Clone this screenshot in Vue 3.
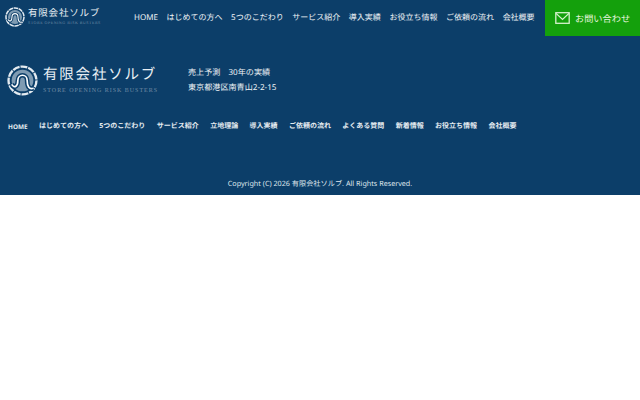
<script setup>
const topNav = ['HOME','はじめての方へ','5つのこだわり','サービス紹介','導入実績','お役立ち情報','ご依頼の流れ','会社概要']
const footNav = ['HOME','はじめての方へ','5つのこだわり','サービス紹介','立地理論','導入実績','ご依頼の流れ','よくある質問','新着情報','お役立ち情報','会社概要']
</script>

<template>
  <div class="page">
    <header class="top">
      <div class="top-logo">
        <svg class="emblem-small" viewBox="0 0 40 40" aria-hidden="true">
          <circle cx="20" cy="20" r="18" fill="none" stroke="#e4ebf1" stroke-width="3" stroke-dasharray="9 1.2"/>
          <circle cx="20" cy="20" r="14" fill="#7f9bb2"/>
          <path d="M6 25c4 6 8 2 8-5 0-9 12-9 12 0 0 8 3 12 8 10" fill="none" stroke="#0c3e69" stroke-width="6"/>
          <path d="M6 25c4 6 8 2 8-5 0-9 12-9 12 0 0 8 3 12 8 10" fill="none" stroke="#fff" stroke-width="2.2"/>
        </svg>
        <div class="logo-text small">
          <div class="logo-jp">有限会社ソルブ</div>
          <div class="logo-en">STORE OPENING RISK BUSTERS</div>
        </div>
      </div>
      <nav class="top-nav">
        <a v-for="n in topNav" :key="n">{{ n }}</a>
      </nav>
      <a class="contact">
        <svg class="mail" viewBox="0 0 16 13" aria-hidden="true">
          <rect x=".75" y=".75" width="14.5" height="11.5" fill="none" stroke="#d6f2cd" stroke-width="1.4"/>
          <path d="M1 1.5l7 6.5 7-6.5" fill="none" stroke="#d6f2cd" stroke-width="1.4"/>
        </svg>
        <span>お問い合わせ</span>
      </a>
    </header>

    <section class="company">
      <div class="main-logo">
        <svg class="emblem-large" viewBox="0 0 40 40" aria-hidden="true">
          <circle cx="20" cy="20" r="18" fill="none" stroke="#e4ebf1" stroke-width="3" stroke-dasharray="9 1.2"/>
          <circle cx="20" cy="20" r="14" fill="#7f9bb2"/>
          <path d="M6 25c4 6 8 2 8-5 0-9 12-9 12 0 0 8 3 12 8 10" fill="none" stroke="#0c3e69" stroke-width="6"/>
          <path d="M6 25c4 6 8 2 8-5 0-9 12-9 12 0 0 8 3 12 8 10" fill="none" stroke="#fff" stroke-width="2.2"/>
        </svg>
        <div class="logo-text large">
          <div class="logo-jp">有限会社ソルブ</div>
          <div class="logo-en">STORE OPENING RISK BUSTERS</div>
        </div>
      </div>
      <div class="address">
        <div>売上予測　30年の実績</div>
        <div>東京都港区南青山2-2-15</div>
      </div>
    </section>

    <nav class="foot-nav">
      <a v-for="n in footNav" :key="n">{{ n }}</a>
    </nav>

    <p class="copy">Copyright (C) 2026 有限会社ソルブ. All Rights Reserved.</p>
  </div>
</template>

<style>
html, body { margin: 0; background: #fff; }
</style>

<style scoped>
.page {
  width: 640px;
  height: 195px;
  background: #0c3e69;
  color: #fff;
  font-family: "Noto Sans", "Noto Sans CJK JP", sans-serif;
  text-rendering: geometricPrecision;
  overflow: hidden;
}
.top { display: flex; height: 36px; align-items: flex-start; }
.top-logo { display: flex; align-items: center; width: 134px; padding: 7px 0 0 5px; box-sizing: border-box; }
.emblem-small { width: 20px; height: 20px; flex: none; }
.logo-text { margin-left: 3px; white-space: nowrap; }
.logo-jp { font-family: "Liberation Serif", "Noto Sans CJK JP", serif; font-weight: 400; color: #e8eef3; }
.logo-en { font-family: "Liberation Serif", serif; color: #6f8ca5; }
.small .logo-jp { font-size: 9.5px; line-height: 12px; letter-spacing: .8px; }
.small .logo-en { font-size: 4px; line-height: 6px; letter-spacing: .5px; }
.top-nav { display: flex; gap: 8.6px; font-size: 8px; line-height: 35px; white-space: nowrap; color: #f0f4f7; flex: 1; }
.contact {
  width: 95px; height: 36px; background: #14a00c; color: #e4f5df;
  display: flex; align-items: center; gap: 5px; padding-left: 10px; box-sizing: border-box;
  font-size: 9.2px; white-space: nowrap;
}
.mail { width: 15px; height: 12px; flex: none; }
.company { display: flex; align-items: center; height: 60px; padding: 0 0 0 7px; margin-top: 14px; }
.main-logo { display: flex; align-items: center; width: 181px; flex: none; }
.emblem-large { width: 31px; height: 31px; flex: none; }
.large { margin-left: 5px; }
.large .logo-jp { font-size: 14.5px; line-height: 20px; letter-spacing: 1.8px; }
.large .logo-en { font-size: 6px; line-height: 8px; letter-spacing: .97px; margin-top: 2px; }
.address { font-size: 8.1px; line-height: 15px; color: #f0f4f7; }
.foot-nav { display: flex; gap: 11.4px; padding: 11px 0 0 8px; font-size: 7px; line-height: 12px; font-weight: 700; color: #e6ecf1; white-space: nowrap; }
.foot-nav a:first-child { font-size: 6.4px; }
.copy { margin: 0; padding-top: 45px; text-align: center; font-size: 7.2px; line-height: 12px; color: #dfe6ec; }
</style>
